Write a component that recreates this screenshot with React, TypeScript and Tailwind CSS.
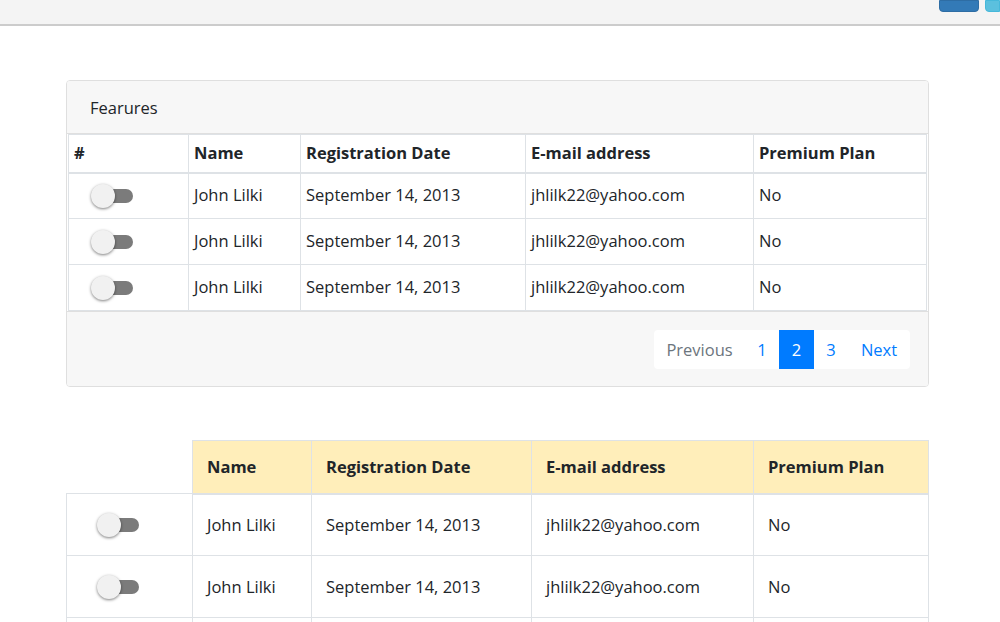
import React from "react"

const rows = [
  { name: "John Lilki", date: "September 14, 2013", email: "jhlilk22@yahoo.com", premium: "No" },
  { name: "John Lilki", date: "September 14, 2013", email: "jhlilk22@yahoo.com", premium: "No" },
  { name: "John Lilki", date: "September 14, 2013", email: "jhlilk22@yahoo.com", premium: "No" },
]

function Toggle() {
  return (
    <span className="relative inline-flex items-center w-[42px] h-[24px]">
      <span className="absolute left-[12px] right-0 h-[14px] rounded-full bg-[#7b7b7b]" />
      <span className="absolute left-0 w-[24px] h-[24px] rounded-full bg-[#f1f1f1] shadow-[0_1px_3px_rgba(0,0,0,0.5)]" />
    </span>
  )
}

export default function App() {
  return (
    <div className="h-[622px] bg-white text-[#212529] text-[16.5px] overflow-hidden" style={{ fontFamily: '"Open Sans", "Noto Sans", sans-serif' }}>
      {/* top bar */}
      <div className="h-[26px] bg-[#f4f4f4] border-b-2 border-[#cccccc] flex justify-end gap-[6px] overflow-hidden">
        <span className="block w-[40px] h-[12px] bg-[#337ab7] border border-[#2e6da4] rounded-b-[4px]" />
        <span className="block w-[15px] h-[12px] bg-[#5bc0de] border border-[#46b8da] rounded-bl-[4px]" />
      </div>

      <div className="pl-[66px] pr-[71px] pt-[54px]">
        {/* card */}
        <div className="border border-[#dfdfdf] rounded-[4px] overflow-hidden">
          <div className="h-[53px] bg-[#f7f7f7] border-b border-[#dfdfdf] flex items-center pl-[23px] pt-[2px]">Fearures</div>
          <div className="px-[1px] bg-white">
            <table className="w-full border-collapse border border-[#dee2e6]">
              <thead>
                <tr className="h-[38px]">
                  <th className="w-[120px] text-left font-bold px-[5px] border border-[#dee2e6] border-b-2">#</th>
                  <th className="w-[112px] text-left font-bold px-[5px] border border-[#dee2e6] border-b-2">Name</th>
                  <th className="w-[225px] text-left font-bold px-[5px] border border-[#dee2e6] border-b-2">Registration Date</th>
                  <th className="w-[228px] text-left font-bold px-[5px] border border-[#dee2e6] border-b-2">E-mail address</th>
                  <th className="text-left font-bold px-[5px] border border-[#dee2e6] border-b-2">Premium Plan</th>
                </tr>
              </thead>
              <tbody>
                {rows.map((r, i) => (
                  <tr key={i} className="h-[46px]">
                    <td className="px-[5px] border border-[#dee2e6]">
                      <div className="pl-[17px] flex items-center"><Toggle /></div>
                    </td>
                    <td className="px-[5px] border border-[#dee2e6]">{r.name}</td>
                    <td className="px-[5px] border border-[#dee2e6]">{r.date}</td>
                    <td className="px-[5px] border border-[#dee2e6]">{r.email}</td>
                    <td className="px-[5px] border border-[#dee2e6]">{r.premium}</td>
                  </tr>
                ))}
              </tbody>
            </table>
          </div>
          <div className="bg-[#f7f7f7] border-t border-[#dfdfdf] h-[75px] flex items-center justify-end pr-[18px]">
            <ul className="flex bg-white rounded-[4px] h-[39px] items-stretch">
              <li className="flex items-center justify-center w-[91px] pt-[2px] text-[#6c757d]">Previous</li>
              <li className="flex items-center justify-center w-[34px] pt-[2px] text-[#007bff]">1</li>
              <li className="flex items-center justify-center w-[35px] pt-[2px] bg-[#007bff] text-white">2</li>
              <li className="flex items-center justify-center w-[34px] pt-[2px] text-[#007bff]">3</li>
              <li className="flex items-center justify-center w-[62px] pt-[2px] text-[#007bff]">Next</li>
            </ul>
          </div>
        </div>

        {/* second table */}
        <table className="w-full border-collapse mt-[53px]">
          <thead>
            <tr className="h-[53px]">
              <th className="w-[126px] bg-white border-b border-[#dee2e6]"></th>
              <th className="w-[119px] text-left font-bold px-[14px] pt-[2px] bg-[#ffeeba] border border-[#dee2e6] border-b-2">Name</th>
              <th className="w-[220px] text-left font-bold px-[14px] pt-[2px] bg-[#ffeeba] border border-[#dee2e6] border-b-2">Registration Date</th>
              <th className="w-[222px] text-left font-bold px-[14px] pt-[2px] bg-[#ffeeba] border border-[#dee2e6] border-b-2">E-mail address</th>
              <th className="text-left font-bold px-[14px] pt-[2px] bg-[#ffeeba] border border-[#dee2e6] border-b-2">Premium Plan</th>
            </tr>
          </thead>
          <tbody>
            {rows.map((r, i) => (
              <tr key={i} className="h-[62px]">
                <td className="px-[14px] border border-[#dee2e6]">
                  <div className="pl-[16px] flex items-center"><Toggle /></div>
                </td>
                <td className="px-[14px] pt-[2px] border border-[#dee2e6]">{r.name}</td>
                <td className="px-[14px] pt-[2px] border border-[#dee2e6]">{r.date}</td>
                <td className="px-[14px] pt-[2px] border border-[#dee2e6]">{r.email}</td>
                <td className="px-[14px] pt-[2px] border border-[#dee2e6]">{r.premium}</td>
              </tr>
            ))}
          </tbody>
        </table>
      </div>
    </div>
  )
}
